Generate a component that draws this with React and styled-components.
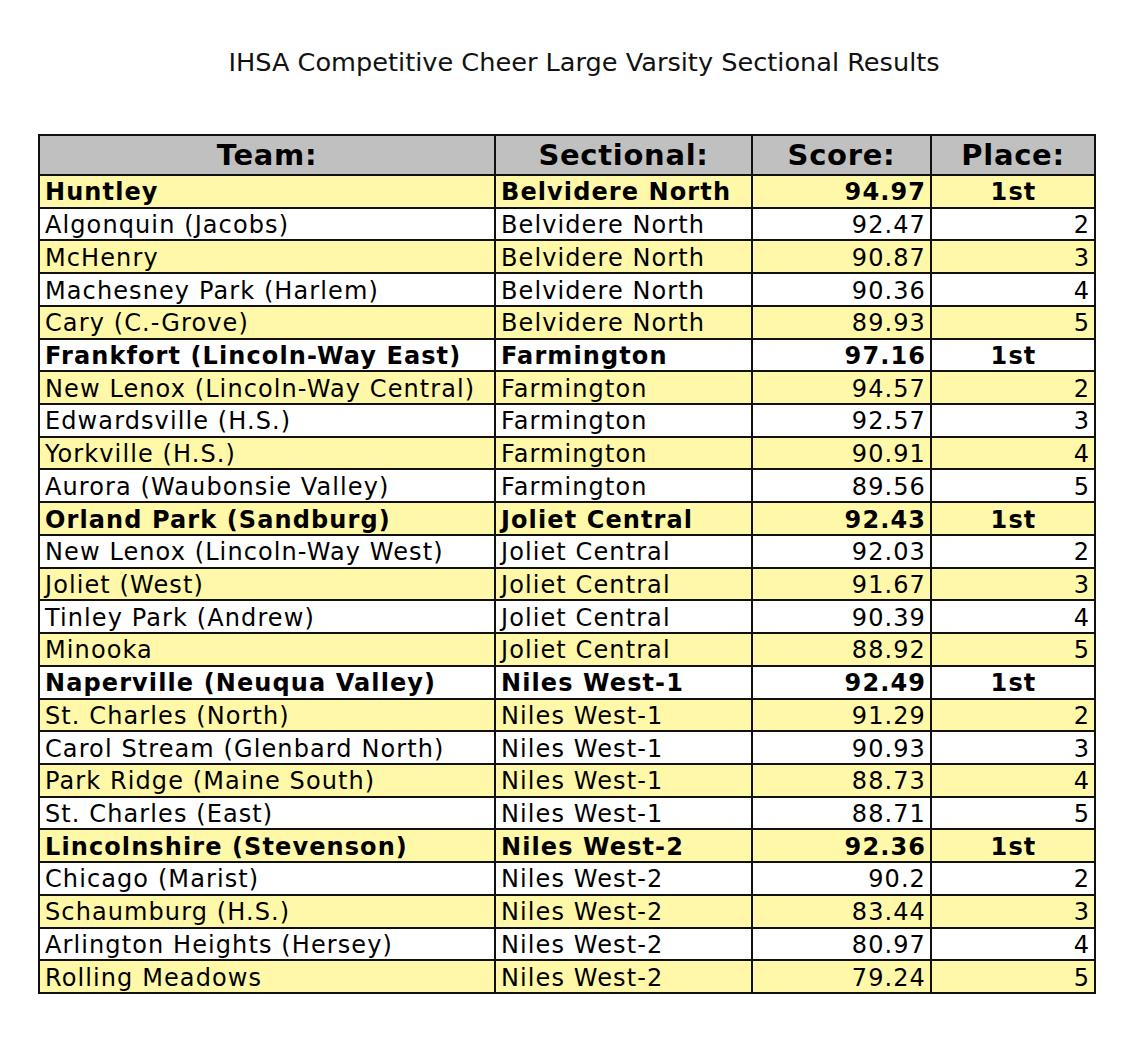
import React from 'react';
import styled, { createGlobalStyle } from 'styled-components';

const rows = [
    ['Huntley', 'Belvidere North', '94.97', '1st'],
    ['Algonquin (Jacobs)', 'Belvidere North', '92.47', '2'],
    ['McHenry', 'Belvidere North', '90.87', '3'],
    ['Machesney Park (Harlem)', 'Belvidere North', '90.36', '4'],
    ['Cary (C.-Grove)', 'Belvidere North', '89.93', '5'],
    ['Frankfort (Lincoln-Way East)', 'Farmington', '97.16', '1st'],
    ['New Lenox (Lincoln-Way Central)', 'Farmington', '94.57', '2'],
    ['Edwardsville (H.S.)', 'Farmington', '92.57', '3'],
    ['Yorkville (H.S.)', 'Farmington', '90.91', '4'],
    ['Aurora (Waubonsie Valley)', 'Farmington', '89.56', '5'],
    ['Orland Park (Sandburg)', 'Joliet Central', '92.43', '1st'],
    ['New Lenox (Lincoln-Way West)', 'Joliet Central', '92.03', '2'],
    ['Joliet (West)', 'Joliet Central', '91.67', '3'],
    ['Tinley Park (Andrew)', 'Joliet Central', '90.39', '4'],
    ['Minooka', 'Joliet Central', '88.92', '5'],
    ['Naperville (Neuqua Valley)', 'Niles West-1', '92.49', '1st'],
    ['St. Charles (North)', 'Niles West-1', '91.29', '2'],
    ['Carol Stream (Glenbard North)', 'Niles West-1', '90.93', '3'],
    ['Park Ridge (Maine South)', 'Niles West-1', '88.73', '4'],
    ['St. Charles (East)', 'Niles West-1', '88.71', '5'],
    ['Lincolnshire (Stevenson)', 'Niles West-2', '92.36', '1st'],
    ['Chicago (Marist)', 'Niles West-2', '90.2', '2'],
    ['Schaumburg (H.S.)', 'Niles West-2', '83.44', '3'],
    ['Arlington Heights (Hersey)', 'Niles West-2', '80.97', '4'],
    ['Rolling Meadows', 'Niles West-2', '79.24', '5'],
];

const App = () => {
    return (
        <Page>
            <GlobalStyle />
            <Title>IHSA Competitive Cheer Large Varsity Sectional Results</Title>
            <Results>
                <colgroup>
                    <col style={{ width: 456 }} />
                    <col style={{ width: 257 }} />
                    <col style={{ width: 179 }} />
                    <col style={{ width: 164 }} />
                </colgroup>
                <thead>
                    <tr>
                        <HeadCell>Team:</HeadCell>
                        <HeadCell>Sectional:</HeadCell>
                        <HeadCell>Score:</HeadCell>
                        <HeadCell>Place:</HeadCell>
                    </tr>
                </thead>
                <tbody>
                    {rows.map(([team, sectional, score, place], i) => {
                        const winner = place === '1st';
                        return (
                            <Row key={i} $shaded={i % 2 === 0}>
                                <Cell $bold={winner}>{team}</Cell>
                                <Cell $bold={winner}>{sectional}</Cell>
                                <Cell $bold={winner} $align="right">{score}</Cell>
                                <Cell $bold={winner} $align={winner ? 'center' : 'right'}>{place}</Cell>
                            </Row>
                        );
                    })}
                </tbody>
            </Results>
        </Page>
    );
};

export default App;

// CSS //
const GlobalStyle = createGlobalStyle`
body {
    margin: 0;
    background: #fff;
    font-family: "DejaVu Sans", Verdana, sans-serif;
}
`;

const Page = styled.div`
width: 1125px;
height: 1056px;
display: flex;
flex-direction: column;
align-items: flex-start;
`;

const Title = styled.h1`
align-self: center;
margin: 47px 0 0 43px;
font-family: "DejaVu Sans", sans-serif;
font-weight: 400;
font-size: 25.6px;
line-height: 30px;
color: #111;
`;

const Results = styled.table`
margin: 57px 0 0 38px;
width: 1056px;
table-layout: fixed;
border-collapse: collapse;
border: 2px solid #000;
`;

const HeadCell = styled.th`
height: 38px;
padding: 0 4px;
background: #c0c0c0;
border: 2px solid #111;
font-size: 29px;
letter-spacing: 0.7px;
font-weight: 700;
text-align: center;
color: #000;
line-height: 1;
`;

const Row = styled.tr`
height: 32.72px;
background: ${p => (p.$shaded ? '#fff8a8' : '#fff')};
`;

const Cell = styled.td`
padding: 2px 4px 0 5px;
border: 2px solid #111;
font-size: 24px;
letter-spacing: 1.1px;
line-height: 1;
font-weight: ${p => (p.$bold ? 700 : 400)};
text-align: ${p => p.$align || 'left'};
color: #000;
white-space: nowrap;
overflow: hidden;
`;
